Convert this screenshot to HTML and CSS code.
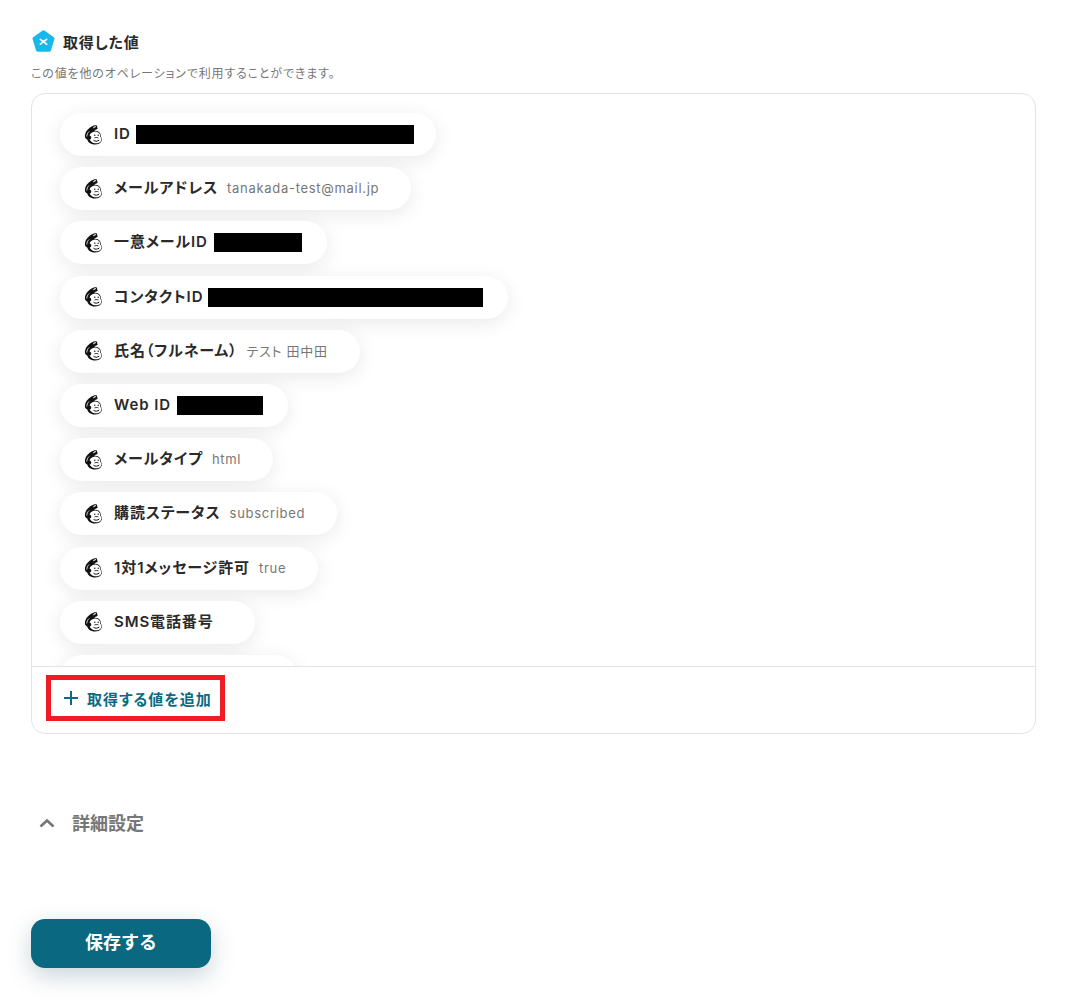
FILE: index.html
```html
<!DOCTYPE html>
<html lang="ja">
<head>
  <meta charset="UTF-8" />
  <title>取得した値</title>
  <link rel="stylesheet" href="styles.css">
</head>
<body>
  <svg class="defs" width="0" height="0">
    <symbol id="chimp" viewBox="0 0 20 20">
      <path fill="#111" d="M12.6 .3c-1.600-.4-3.800.3-5.500 1.400C4.800 3.100 2.600 5.300 1.600 7.800c-.7 1.800-1 3.500-.4 4.900.4.900 1.100 1.500 2 1.700.7 2.300 2.600 4.500 6.300 5 3.400.4 7-.5 8.100-3.400.6-1.500.3-3.100-.7-4.200.1-2.400-1-4.500-3-5.500-1.300-.6-2.700-.7-4-.4 1-.9 2.200-1.600 3.700-2-.2-1.100-.4-2.300-.6-2.700z"/>
      <path fill="#fff" d="M8.500 7.200c2.400-1.300 5.400-.7 6.900 1.300.7 1 1 2.200.9 3.400 1 .7 1.400 1.800 1.100 3-.6 2.500-3.500 3.700-6.700 3.300-2.700-.4-4.400-1.900-5-3.700 1.100-.3 1.700-1.100 1.500-2.200-.2-1-.9-1.600-1.700-1.700.3-1.400 1.100-2.600 3-3.400z"/>
      <path fill="#fff" d="M9.600 2c.8-.5 1.500-.8 2.100-.9l.2.8c-1.100.4-2.200 1-3 1.700z"/>
      <path fill="none" stroke="#fff" stroke-width=".8" d="M2.800 11.500c0-1.800.9-3.700 2.300-5"/>
      <path fill="none" stroke="#111" stroke-width="1" d="M9.500 15.300c1.500 1.200 4.300 1.200 5.800-.3M10.500 12.900c1.200-.5 2.800-.5 3.900 0"/>
      <circle fill="#111" cx="10.800" cy="10.300" r=".7"/>
      <circle fill="#111" cx="14.200" cy="10.300" r=".7"/>
    </symbol>
  </svg>

  <main class="page">
    <section class="values">
      <h2 class="values-title">
        <svg class="penta" viewBox="0 0 22 22">
          <path fill="#18b9ea" stroke="#18b9ea" stroke-width="3" stroke-linejoin="round" d="M11 1.800l9 6.400-3.300 11H5.300L2 8.200z"/>
          <path fill="none" stroke="#fff" stroke-width="1.600" stroke-linecap="round" d="M8 9c1.300.8 1.800 1.600 3 2 1.200-.4 1.700-1.200 3-2M8 13.600c1.300-.8 1.800-1.800 3-2.600 1.200.8 1.700 1.800 3 2.600"/>
        </svg>
        取得した値
      </h2>
      <p class="values-note">この値を他のオペレーションで利用することができます。</p>

      <div class="card">
        <div class="list">
          <div class="pill">
            <svg class="chimp"><use href="#chimp"/></svg>
            <span class="name">ID</span>
            <span class="hidden-value w-id"></span>
          </div>
          <div class="pill">
            <svg class="chimp"><use href="#chimp"/></svg>
            <span class="name">メールアドレス</span>
            <span class="val">tanakada-test@mail.jp</span>
          </div>
          <div class="pill">
            <svg class="chimp"><use href="#chimp"/></svg>
            <span class="name">一意メールID</span>
            <span class="hidden-value w-unique"></span>
          </div>
          <div class="pill">
            <svg class="chimp"><use href="#chimp"/></svg>
            <span class="name">コンタクトID</span>
            <span class="hidden-value w-contact"></span>
          </div>
          <div class="pill">
            <svg class="chimp"><use href="#chimp"/></svg>
            <span class="name">氏名（フルネーム）</span>
            <span class="val">テスト 田中田</span>
          </div>
          <div class="pill">
            <svg class="chimp"><use href="#chimp"/></svg>
            <span class="name">Web ID</span>
            <span class="hidden-value w-web"></span>
          </div>
          <div class="pill">
            <svg class="chimp"><use href="#chimp"/></svg>
            <span class="name">メールタイプ</span>
            <span class="val">html</span>
          </div>
          <div class="pill">
            <svg class="chimp"><use href="#chimp"/></svg>
            <span class="name">購読ステータス</span>
            <span class="val">subscribed</span>
          </div>
          <div class="pill">
            <svg class="chimp"><use href="#chimp"/></svg>
            <span class="name">1対1メッセージ許可</span>
            <span class="val">true</span>
          </div>
          <div class="pill">
            <svg class="chimp"><use href="#chimp"/></svg>
            <span class="name">SMS電話番号</span>
            <span class="val"></span>
          </div>
          <div class="pill pill-cut"></div>
        </div>
        <div class="card-foot">
          <button class="add-btn">
            <svg class="plus" viewBox="0 0 14 14"><path fill="none" stroke="#0b6a82" stroke-width="2" d="M7 0v14M0 7h14"/></svg>
            取得する値を追加
          </button>
        </div>
      </div>
    </section>

    <div class="details">
      <svg class="chevron" viewBox="0 0 16 10"><path fill="none" stroke="#757575" stroke-width="2.600" d="M1.500 8.500L8 2.500l6.500 6"/></svg>
      <span class="details-label">詳細設定</span>
    </div>

    <button class="save">保存する</button>
  </main>
</body>
</html>
```

FILE: styles.css
```css
* {
  margin: 0;
  padding: 0;
  box-sizing: border-box;
}

body {
  background: #fff;
  color: #2a2a2a;
  font-family: 'Inter', 'Noto Sans CJK JP', sans-serif;
  font-feature-settings: "palt";
  overflow: hidden;
}

.defs {
  position: absolute;
}

.page {
  height: 1005px;
  padding: 31px 31px 0;
}

.values-title {
  display: flex;
  align-items: center;
  gap: 8px;
  height: 21px;
  padding-left: 1px;
  font-size: 15px;
  font-weight: 600;
  letter-spacing: 0.8px;
}

.penta {
  width: 23px;
  height: 23px;
  flex-shrink: 0;
}

.values-note {
  margin-top: 14px;
  font-size: 12px;
  line-height: 16px;
  letter-spacing: 0.85px;
  color: #777;
}

.card {
  margin-top: 11px;
  width: 1005px;
  height: 641px;
  border: 1px solid #e3e3e3;
  border-radius: 14px;
}

.list {
  height: 572px;
  padding: 19px 28px 0;
  overflow: hidden;
  display: flex;
  flex-direction: column;
  align-items: flex-start;
  gap: 11.2px;
}

.pill {
  display: flex;
  align-items: center;
  flex-shrink: 0;
  height: 43px;
  padding: 0 22px 0 24px;
  border-radius: 22px;
  background: #fff;
  box-shadow: 0 4px 20px rgba(0, 0, 0, 0.09);
}

.pill-cut {
  width: 238px;
}

.chimp {
  width: 20px;
  height: 20px;
  margin-right: 10px;
}

.name {
  font-size: 15px;
  line-height: 20px;
  margin-top: -1px;
  font-weight: 600;
  letter-spacing: 0.9px;
  white-space: nowrap;
}

.val {
  margin: -1px 10px 0 9px;
  font-size: 13px;
  line-height: 20px;
  letter-spacing: 0.7px;
  color: #777;
  white-space: nowrap;
}

.hidden-value {
  height: 19px;
  margin: 0 3px 0 6px;
  background: #000;
}

.w-id {
  width: 278px;
  margin: 0 0 0 5px;
}

.w-unique {
  width: 88px;
}

.w-contact {
  width: 275px;
  margin-left: 5px;
}

.w-web {
  width: 86px;
}

.card-foot {
  height: 67px;
  padding: 8px 14px;
  border-top: 1px solid #e3e3e3;
}

.add-btn {
  display: flex;
  align-items: center;
  gap: 9px;
  width: 179px;
  height: 46px;
  padding-left: 13px;
  border: 5px solid #ee1c25;
  background: #fff;
  color: #0b6a82;
  font-family: inherit;
  font-feature-settings: "palt";
  font-size: 15px;
  font-weight: 600;
  letter-spacing: 1px;
}

.plus {
  width: 14px;
  height: 14px;
}

.details {
  display: flex;
  align-items: center;
  gap: 17px;
  margin-top: 75px;
  padding-left: 8px;
  height: 27px;
  font-size: 18px;
  font-weight: 600;
  color: #777;
}

.details-label {
  margin-top: -2px;
}

.chevron {
  width: 16px;
  height: 10px;
}

.save {
  display: block;
  width: 180px;
  height: 49px;
  margin-top: 83px;
  padding-bottom: 5px;
  border: none;
  border-radius: 14px;
  background: #0a6880;
  color: #fff;
  font-family: inherit;
  font-size: 18px;
  font-weight: 600;
  box-shadow: 0 8px 24px rgba(10, 60, 80, 0.22);
}
```
